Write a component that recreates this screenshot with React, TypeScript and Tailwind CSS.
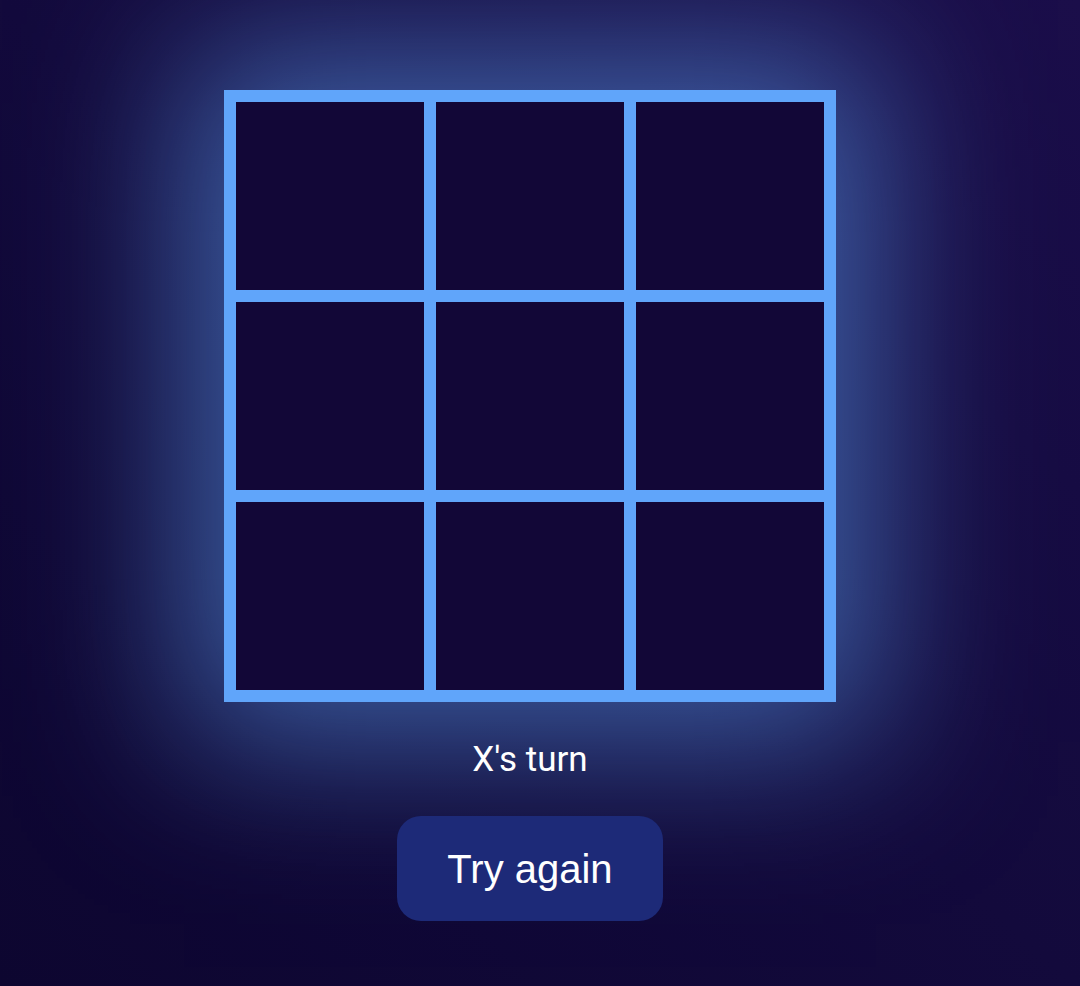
import React, { useState } from 'react';

type Cell = 'X' | 'O' | null;

const App: React.FC = () => {
  const [cells, setCells] = useState<Cell[]>(Array(9).fill(null));
  const [turn, setTurn] = useState<'X' | 'O'>('X');

  const play = (i: number) => {
    if (cells[i]) return;
    const next = [...cells];
    next[i] = turn;
    setCells(next);
    setTurn(turn === 'X' ? 'O' : 'X');
  };

  const reset = () => {
    setCells(Array(9).fill(null));
    setTurn('X');
  };

  return (
    <div className="min-h-screen w-full overflow-hidden bg-gradient-to-tr from-[#0d0630] via-[#130a3c] to-[#1b0e4a] pr-[20px]">
      <div className="flex flex-col items-center pt-[90px]">
        {/* Board */}
        <div className="grid h-[612px] w-[612px] grid-cols-3 grid-rows-3 gap-[12px] border-[12px] border-[#60a5fa] bg-[#60a5fa] shadow-[0_0_150px_40px_rgba(96,165,250,0.55)]">
          {cells.map((c, i) => (
            <button
              key={i}
              onClick={() => play(i)}
              className="flex items-center justify-center bg-[#120737] text-[96px] font-bold text-[#60a5fa] [font-family:'Liberation_Sans',sans-serif]"
            >
              {c}
            </button>
          ))}
        </div>

        <p className="mt-[37px] text-[35px] leading-[41px] text-white [font-family:Roboto,sans-serif]">
          {turn}'s turn
        </p>

        <button
          onClick={reset}
          className="mt-[36px] flex h-[105px] w-[266px] items-center justify-center rounded-[24px] bg-[#1d2a78] text-[40px] leading-[46px] text-white [font-family:'Liberation_Sans',Arial,sans-serif]"
        >
          Try again
        </button>
      </div>
    </div>
  );
};

export default App;
